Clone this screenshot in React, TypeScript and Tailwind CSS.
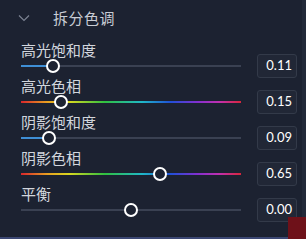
const ROWS = [
  { label: "高光饱和度", value: "0.11", pos: 32, kind: "fill" },
  { label: "高光色相", value: "0.15", pos: 40, kind: "hue" },
  { label: "阴影饱和度", value: "0.09", pos: 28, kind: "fill" },
  { label: "阴影色相", value: "0.65", pos: 139, kind: "hue" },
  { label: "平衡", value: "0.00", pos: 110, kind: "plain" },
]

const HUE =
  "linear-gradient(to right, #d8262c 0%, #e8a020 12%, #d8d820 22%, #30c040 38%, #20b8c8 55%, #2050d8 68%, #8030d0 80%, #c030b0 90%, #d8263c 100%)"

function Slider({ pos, kind }: { pos: number; kind: string }) {
  return (
    <div className="relative h-[16px] w-[220px] shrink-0">
      <div
        className="absolute left-0 right-0 top-[7px] h-[2px] bg-[#3a4152]"
        style={kind === "hue" ? { background: HUE } : undefined}
      />
      {kind === "fill" && (
        <div className="absolute left-0 top-[7px] h-[2px] bg-[#3f8fd6]" style={{ width: pos }} />
      )}
      <div
        className="absolute top-[1px] h-[14px] w-[14px] -translate-x-1/2 rounded-full border-2 border-white bg-[#1c2231]"
        style={{ left: pos }}
      />
    </div>
  )
}

export default function App() {
  return (
    <div className="relative flex h-[239px] w-[306px] overflow-hidden bg-[#1c2231] font-['Noto_Sans_CJK_SC',sans-serif]">
      <div className="flex flex-1 flex-col">
        <div className="flex h-[34px] items-center pt-[1px]">
          <svg className="ml-[18px] h-[8px] w-[12px]" viewBox="0 0 12 8" fill="none">
            <path d="M1 1.5 L6 6.5 L11 1.5" stroke="#7b8292" strokeWidth="1.2" />
          </svg>
          <span className="ml-[23px] text-[15px] leading-none tracking-[0.5px] text-[#c9cdd5]">拆分色调</span>
        </div>
        <div className="mt-[8px] flex flex-col gap-[4px] pl-[21px]">
          {ROWS.map((r) => (
            <div key={r.label} className="flex flex-col">
              <div className="h-[16px] text-[15px] leading-[16px] text-[#d2d6dd]">{r.label}</div>
              <div className="flex h-[16px] items-center">
                <Slider pos={r.pos} kind={r.kind} />
                <div className="ml-[16px] flex h-[24px] w-[40px] shrink-0 items-center justify-end rounded-[3px] border border-[#333a49] bg-[#212736] pr-[4px] font-['Lato',sans-serif] text-[13px] text-white">
                  {r.value}
                </div>
              </div>
            </div>
          ))}
        </div>
      </div>
      <div className="w-[4px] shrink-0 bg-[#222939]" />
      <div className="absolute bottom-0 right-0 h-[22px] w-[18px] bg-[#6e1119]" />
      <div className="absolute bottom-0 left-0 h-[2px] w-[288px] bg-[#3b4773]" />
    </div>
  )
}
